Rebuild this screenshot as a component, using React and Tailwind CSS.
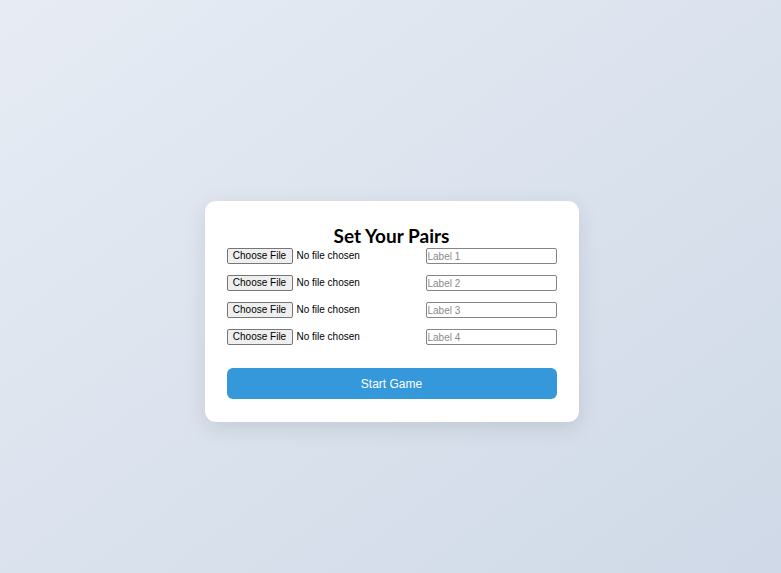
export default function App() {
  const rows = [1, 2, 3, 4];
  return (
    <div className="w-full h-[573px] flex items-center justify-center bg-gradient-to-br from-[#e7ecf4] to-[#cfd9e7] font-['Liberation_Sans',Arial,sans-serif]">
      <div className="w-[374px] bg-white rounded-[11px] shadow-[0_6px_22px_rgba(0,0,0,0.1)] px-[22px] pt-[22px] pb-[23px] mt-[50px] ml-[2px]">
        <h2 className="h-[25px] text-center text-[19px] leading-[26px] font-bold text-black font-['Lato','Liberation_Sans',sans-serif]">
          Set Your Pairs
        </h2>
        <div className="flex flex-col gap-[11px]">
          {rows.map((n) => (
            <div key={n} className="flex items-center justify-between h-[16px]">
              <div className="flex items-center">
                <span className="flex items-center justify-center h-[16px] w-[66px] border border-[#767676] bg-[#efefef] rounded-[2px] text-[10px] text-black leading-none">
                  Choose File
                </span>
                <span className="ml-[4px] text-[10px] text-black leading-none">No file chosen</span>
              </div>
              <input
                type="text"
                placeholder={`Label ${n}`}
                className="w-[131px] h-[16px] border border-[#858585] rounded-[2px] px-[1px] text-[10px] leading-none text-black placeholder:text-[#8a8a8a] outline-none"
              />
            </div>
          ))}
        </div>
        <button className="mt-[23px] w-full h-[31px] bg-[#3498db] rounded-[6px] text-white text-[12px] leading-none flex items-center justify-center">
          Start Game
        </button>
      </div>
    </div>
  );
}
